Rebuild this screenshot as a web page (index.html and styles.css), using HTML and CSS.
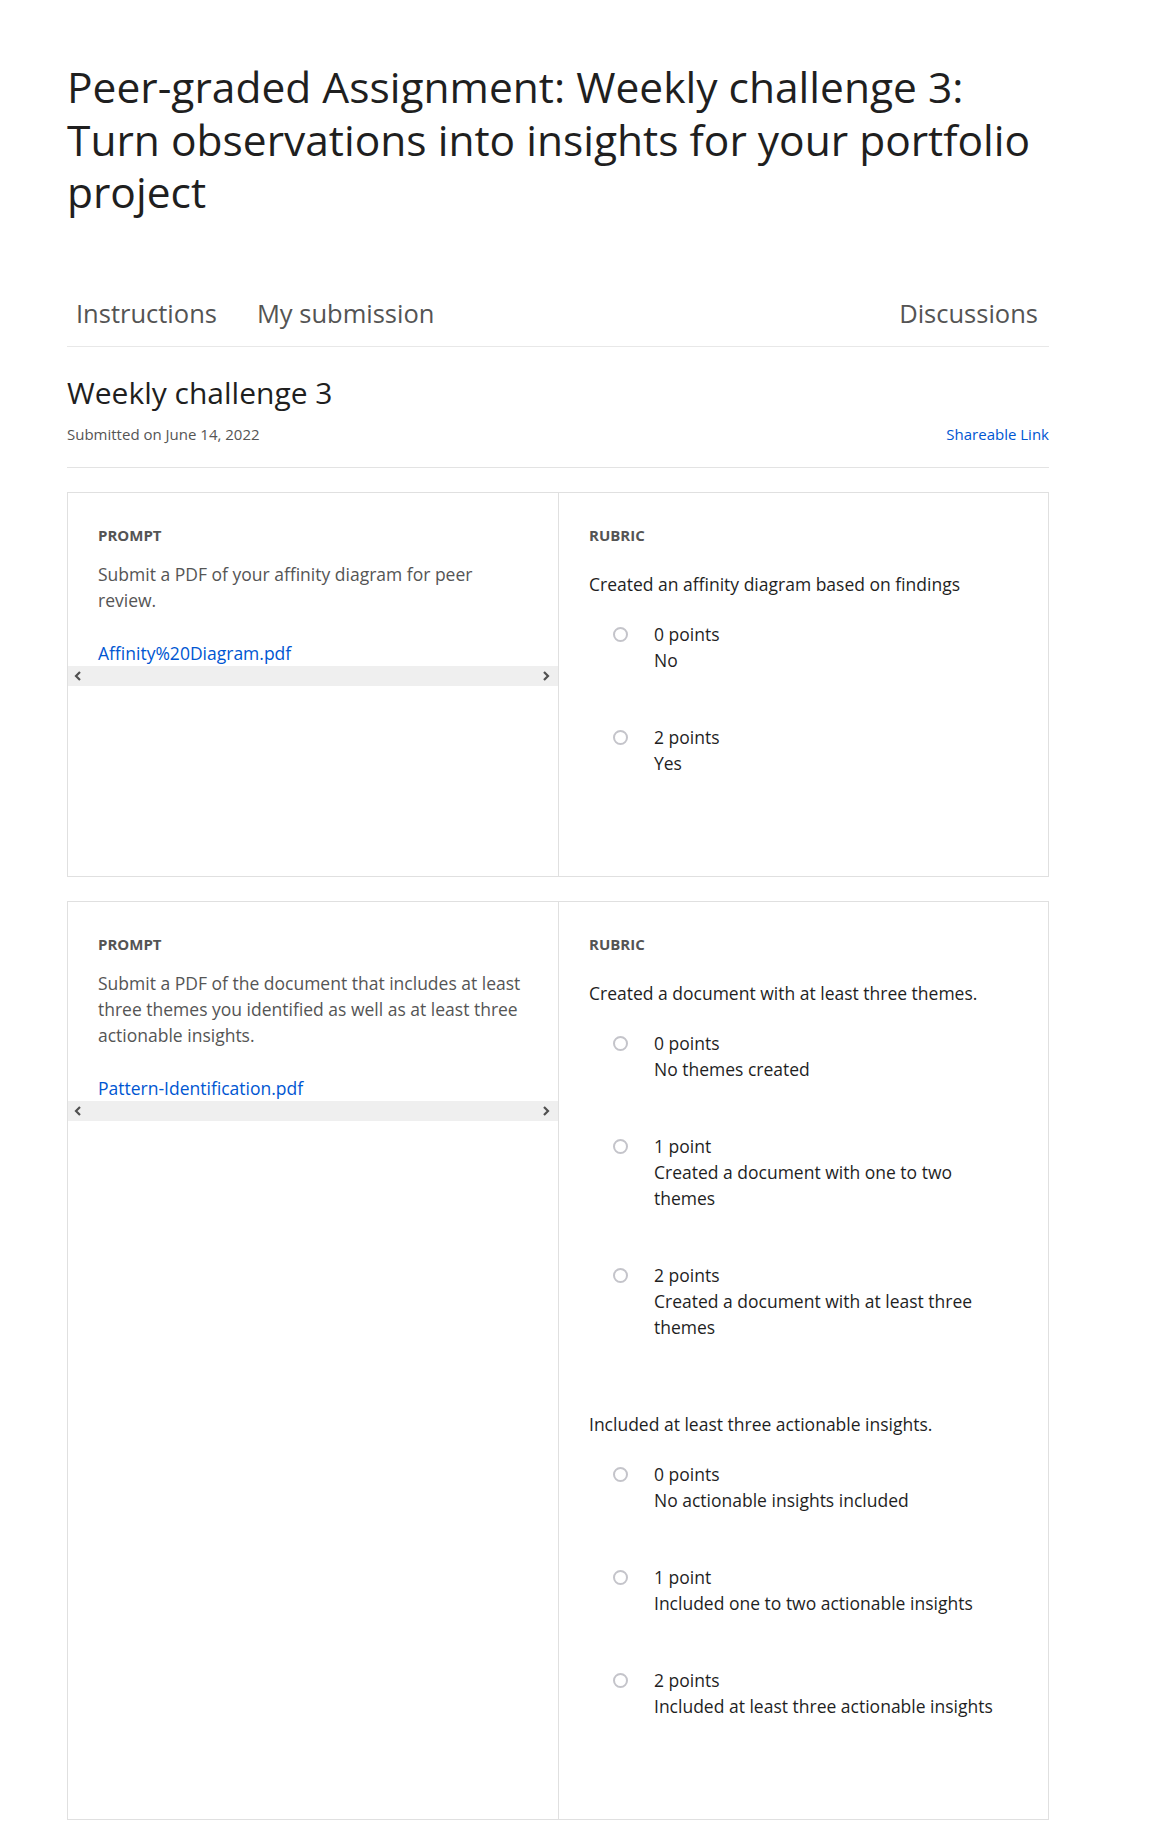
FILE: index.html
```html
<!DOCTYPE html>
<html lang="en">
<head>
<meta charset="utf-8">
<title>Peer-graded Assignment: Weekly challenge 3</title>
<link rel="stylesheet" href="styles.css">
</head>
<body>
<main class="page">
  <h1 class="title">Peer-graded Assignment: Weekly challenge 3: Turn observations into insights for your portfolio project</h1>

  <nav class="tabs">
    <a class="tab">Instructions</a>
    <a class="tab">My submission</a>
    <span class="tab-spacer"></span>
    <a class="tab">Discussions</a>
  </nav>

  <header class="sub-head">
    <h2 class="sub-title">Weekly challenge 3</h2>
    <div class="sub-meta">
      <span class="sub-date">Submitted on June 14, 2022</span>
      <a class="link share">Shareable Link</a>
    </div>
  </header>

  <section class="card">
    <div class="cell prompt-cell">
      <div class="scroll">
        <div class="label">PROMPT</div>
        <p class="prompt-text">Submit a PDF of your affinity diagram for peer review.</p>
        <a class="link file">Affinity%20Diagram.pdf</a>
      </div>
      <div class="hbar">
        <svg class="arr" width="8" height="10" viewBox="0 0 8 10"><polyline points="6,1 2,5 6,9" fill="none" stroke="#505050" stroke-width="2.2"/></svg>
        <svg class="arr" width="8" height="10" viewBox="0 0 8 10"><polyline points="2,1 6,5 2,9" fill="none" stroke="#505050" stroke-width="2.2"/></svg>
      </div>
    </div>
    <div class="cell rubric-cell">
      <div class="label">RUBRIC</div>
      <div class="criterion">
        <p class="crit-title">Created an affinity diagram based on findings</p>
        <div class="option"><span class="radio"></span><div class="opt-text"><div>0 points</div><div>No</div></div></div>
        <div class="option"><span class="radio"></span><div class="opt-text"><div>2 points</div><div>Yes</div></div></div>
      </div>
    </div>
  </section>

  <section class="card">
    <div class="cell prompt-cell">
      <div class="scroll">
        <div class="label">PROMPT</div>
        <p class="prompt-text">Submit a PDF of the document that includes at least three themes you identified as well as at least three actionable insights.</p>
        <a class="link file">Pattern-Identification.pdf</a>
      </div>
      <div class="hbar">
        <svg class="arr" width="8" height="10" viewBox="0 0 8 10"><polyline points="6,1 2,5 6,9" fill="none" stroke="#505050" stroke-width="2.2"/></svg>
        <svg class="arr" width="8" height="10" viewBox="0 0 8 10"><polyline points="2,1 6,5 2,9" fill="none" stroke="#505050" stroke-width="2.2"/></svg>
      </div>
    </div>
    <div class="cell rubric-cell">
      <div class="label">RUBRIC</div>
      <div class="criterion">
        <p class="crit-title">Created a document with at least three themes.</p>
        <div class="option"><span class="radio"></span><div class="opt-text"><div>0 points</div><div>No themes created</div></div></div>
        <div class="option"><span class="radio"></span><div class="opt-text"><div>1 point</div><div>Created a document with one to two themes</div></div></div>
        <div class="option"><span class="radio"></span><div class="opt-text"><div>2 points</div><div>Created a document with at least three themes</div></div></div>
      </div>
      <div class="criterion">
        <p class="crit-title">Included at least three actionable insights.</p>
        <div class="option"><span class="radio"></span><div class="opt-text"><div>0 points</div><div>No actionable insights included</div></div></div>
        <div class="option"><span class="radio"></span><div class="opt-text"><div>1 point</div><div>Included one to two actionable insights</div></div></div>
        <div class="option"><span class="radio"></span><div class="opt-text"><div>2 points</div><div>Included at least three actionable insights</div></div></div>
      </div>
    </div>
  </section>
</main>
</body>
</html>
```

FILE: styles.css
```css
* { box-sizing: border-box; }

body {
  margin: 0;
  background: #fff;
  font-family: "Open Sans", "Noto Sans", "Liberation Sans", sans-serif;
  color: #1f1f1f;
}

.page {
  width: 982px;
  margin-left: 67px;
  padding-top: 61px;
  padding-bottom: 16px;
}

.title {
  margin: 0;
  font-size: 42.5px;
  line-height: 52.5px;
  font-weight: 400;
  color: #1f1f1f;
}

.tabs {
  display: flex;
  align-items: center;
  margin-top: 77px;
  height: 51px;
  border-bottom: 1px solid #e8e8e8;
  padding: 0 11px 16px 9px;
}

.tab {
  font-size: 25.5px;
  line-height: 34px;
  color: #545454;
  margin-right: 40px;
}

.tab:last-child { margin-right: 0; }

.tab-spacer { flex: 1; }

.sub-head {
  border-bottom: 1px solid #e3e3e3;
  padding: 26px 0 23px;
}

.sub-title {
  margin: 0;
  font-size: 30px;
  line-height: 40px;
  font-weight: 400;
  color: #1f1f1f;
}

.sub-meta {
  display: flex;
  justify-content: space-between;
  align-items: center;
  margin-top: 11px;
  font-size: 15px;
  line-height: 20px;
}

.sub-date { color: #555; }

.link { color: #0056d2; text-decoration: none; }

.share { font-size: 15px; }

.card {
  display: grid;
  grid-template-columns: 490px 1fr;
  border: 1px solid #e0e0e0;
  margin-top: 24px;
}

.cell { min-width: 0; }

.rubric-cell {
  border-left: 1px solid #e0e0e0;
  padding: 25px 30px 31px 30px;
}

.scroll {
  padding: 25px 30px 0 30px;
}

.label {
  font-size: 15px;
  line-height: 34px;
  font-weight: 700;
  color: #545454;
}

.prompt-text {
  margin: 9px 0 0;
  font-size: 17.5px;
  line-height: 26px;
  color: #555;
}

.file {
  display: block;
  margin-top: 27px;
  font-size: 17.5px;
  line-height: 26px;
}

.hbar {
  height: 20px;
  background: #efefef;
  display: flex;
  justify-content: space-between;
  align-items: center;
  padding: 0 8px 0 6px;
}

.arr { display: block; }

.criterion { padding-bottom: 18px; }

.crit-title {
  margin: 19px 0 24px;
  font-size: 17.5px;
  line-height: 26px;
  color: #1f1f1f;
}

.criterion + .criterion .crit-title { margin-top: 2px; }

.option {
  display: flex;
  align-items: flex-start;
  padding-left: 24px;
  margin-bottom: 51px;
}

.radio {
  flex: none;
  width: 15px;
  height: 15px;
  margin-top: 6px;
  border: 2px solid #c4c4ca;
  border-radius: 50%;
  margin-right: 26px;
}

.opt-text {
  font-size: 17.5px;
  line-height: 26px;
  color: #1f1f1f;
  max-width: 350px;
}
```
